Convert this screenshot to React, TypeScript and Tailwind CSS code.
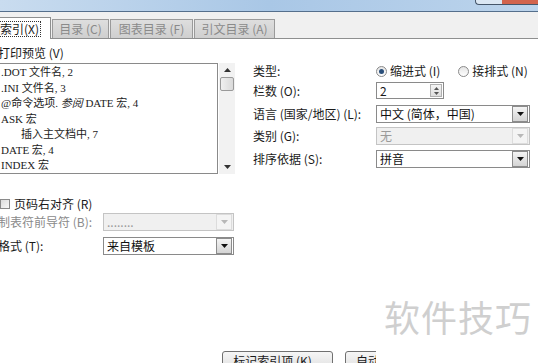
import React from "react";

const tabs = [
  { label: "目录 (C)", w: "w-[57px]" },
  { label: "图表目录 (F)", w: "w-[83px]" },
  { label: "引文目录 (A)", w: "w-[81px]" },
];

const previewLines: { text: React.ReactNode; indent?: boolean }[] = [
  { text: ".DOT 文件名, 2" },
  { text: ".INI 文件名, 3" },
  {
    text: (
      <>
        @命令选项. <i>参阅</i> DATE 宏, 4
      </>
    ),
  },
  { text: "ASK 宏" },
  { text: "插入主文档中, 7", indent: true },
  { text: "DATE 宏, 4" },
  { text: "INDEX 宏" },
  { text: "排版", indent: true },
];

const Arrow = ({ disabled }: { disabled?: boolean }) => (
  <svg width="7" height="4" viewBox="0 0 7 4">
    <path d="M0 0h7L3.5 4z" fill={disabled ? "#b8b8b8" : "#111"} />
  </svg>
);

const Select = ({
  value,
  disabled,
  className = "",
}: {
  value: string;
  disabled?: boolean;
  className?: string;
}) => (
  <div
    className={`flex h-[18px] items-center border ${
      disabled
        ? "border-[#c4c4c4] bg-[#f0f0f0] text-[#9a9a9a]"
        : "border-[#8a8a8a] bg-white text-[#111]"
    } ${className}`}
  >
    <span className="flex-1 pl-[3px] leading-none">{value}</span>
    <span
      className={`mr-[1px] flex h-[16px] w-[16px] items-center justify-center border ${
        disabled
          ? "border-[#dcdcdc] bg-[#f4f4f4]"
          : "border-[#8c8c8c] bg-gradient-to-b from-[#f4f4f4] to-[#d4d4d4]"
      }`}
    >
      <Arrow disabled={disabled} />
    </span>
  </div>
);

const Radio = ({ checked, label }: { checked?: boolean; label: string }) => (
  <label className="flex items-center gap-[3px]">
    <span className="flex h-[11px] w-[11px] items-center justify-center rounded-full border border-[#8a8a8a] bg-gradient-to-b from-[#e4e4e4] to-[#ffffff]">
      {checked && (
        <span className="h-[5px] w-[5px] rounded-full bg-[#2a4f7a]" />
      )}
    </span>
    <span className="leading-none">{label}</span>
  </label>
);

export default function App() {
  return (
    <div className="relative h-[363px] w-[538px] overflow-hidden bg-white font-['Noto_Sans_CJK_SC',sans-serif] text-[12px] text-[#1a1a1a]">
      {/* title bar */}
      <div className="flex h-[12px] justify-end border-b border-[#556f8c] bg-gradient-to-r from-[#c9dcef] via-[#a9c7e6] to-[#bcd4ec]">
        <div className="flex h-[5px] w-[63px] items-stretch rounded-bl-[4px] border-b border-l border-[#45566a] bg-[#dbe7f3]">
          <div className="ml-[26px] flex-1 bg-[#d2644d]" />
        </div>
      </div>

      {/* tab strip */}
      <div className="flex h-[27px] items-end border-b border-[#8e8f8f] bg-[#f0f0f0]">
        <div className="-mb-[1px] flex h-[22px] w-[51px] items-center border-r border-t border-[#8e8f8f] bg-white">
          <span className="-ml-[2px] border border-dotted border-[#333] px-[1px] leading-[14px]">
            索引(X)
          </span>
        </div>
        {tabs.map((t) => (
          <div
            key={t.label}
            className={`ml-[1px] flex h-[19px] ${t.w} items-center justify-center border border-b-0 border-[#9a9a9a] bg-gradient-to-b from-[#dedede] to-[#cfcfcf] text-[#8a8a8a]`}
          >
            {t.label}
          </div>
        ))}
      </div>

      {/* body */}
      <div className="flex">
        {/* left column */}
        <div className="-ml-[4px] w-[241px]">
          <div className="mt-[8px] pl-[2px] leading-[12px]">打印预览 (V)</div>
          <div className="mt-[4px] flex">
            <div className="h-[111px] w-[222px] overflow-hidden border border-[#8a8a8a] bg-white pl-[4px] pt-[1px] font-['Liberation_Serif','Noto_Sans_CJK_SC',serif] text-[11px] text-[#222]">
              {previewLines.map((l, i) => (
                <div
                  key={i}
                  className={`h-[15.5px] leading-[15.5px] whitespace-nowrap ${
                    l.indent ? "pl-[20px]" : ""
                  }`}
                >
                  {l.text}
                </div>
              ))}
            </div>
            <div className="ml-[1px] flex h-[111px] w-[16px] flex-col items-center bg-[#f2f2f2]">
              <svg width="7" height="4" viewBox="0 0 7 4" className="mt-[5px]">
                <path d="M0 4h7L3.5 0z" fill="#333" />
              </svg>
              <div className="mt-[5px] h-[14px] w-[14px] rounded-[2px] border border-[#9a9a9a] bg-gradient-to-r from-[#f0f0f0] to-[#dadada]" />
              <div className="flex-1" />
              <svg width="7" height="4" viewBox="0 0 7 4" className="mb-[5px]">
                <path d="M0 0h7L3.5 4z" fill="#333" />
              </svg>
            </div>
          </div>

          <div className="mt-[24px] flex items-center gap-[4px] pl-[4px]">
            <span className="h-[10px] w-[10px] border border-[#8a8a8a] bg-gradient-to-br from-[#dcdcdc] to-[#f8f8f8]" />
            <span className="leading-none">页码右对齐 (R)</span>
          </div>
          <div className="mt-[3px] flex items-center">
            <span className="w-[107px] pl-[2px] leading-none text-[#8a8a8a]">
              制表符前导符 (B):
            </span>
            <Select value="........" disabled className="w-[131px]" />
          </div>
          <div className="mt-[6px] flex items-center">
            <span className="w-[107px] pl-[2px] leading-none">格式 (T):</span>
            <Select value="来自模板" className="w-[131px]" />
          </div>
        </div>

        {/* right column */}
        <div className="ml-[16px] w-[277px]">
          <div className="mt-[24px] flex h-[16px] items-center">
            <span className="w-[123px] leading-none">类型:</span>
            <div className="flex items-center gap-[18px]">
              <Radio checked label="缩进式 (I)" />
              <Radio label="接排式 (N)" />
            </div>
          </div>
          <div className="mt-[3px] flex items-center">
            <span className="w-[123px] leading-none">栏数 (O):</span>
            <div className="flex h-[17px] w-[68px] items-center border border-[#8a8a8a] bg-white">
              <span className="flex-1 pl-[3px] leading-none">2</span>
              <div className="mr-[1px] flex h-[13px] w-[12px] flex-col items-center justify-center gap-[2px] border border-[#b0b0b0] bg-gradient-to-b from-[#f4f4f4] to-[#dedede]">
                <svg width="5" height="3" viewBox="0 0 5 3">
                  <path d="M0 3h5L2.5 0z" fill="#555" />
                </svg>
                <svg width="5" height="3" viewBox="0 0 5 3">
                  <path d="M0 0h5L2.5 3z" fill="#555" />
                </svg>
              </div>
            </div>
          </div>
          <div className="mt-[6px] flex items-center">
            <span className="w-[123px] leading-none">语言 (国家/地区) (L):</span>
            <Select value="中文 (简体，中国)" className="w-[154px]" />
          </div>
          <div className="mt-[4px] flex items-center">
            <span className="w-[123px] leading-none">类别 (G):</span>
            <Select value="无" disabled className="w-[154px]" />
          </div>
          <div className="mt-[5px] flex items-center">
            <span className="w-[123px] leading-none">排序依据 (S):</span>
            <Select value="拼音" className="w-[154px]" />
          </div>
        </div>
      </div>

      {/* bottom buttons */}
      <div className="absolute left-[222px] top-[351px] flex w-[154px] gap-[12px] overflow-hidden">
        <div className="flex h-[22px] w-[111px] shrink-0 items-start justify-center rounded-[3px] border border-[#707070] bg-gradient-to-b from-[#f6f6f6] to-[#dcdcdc] pt-[3px] leading-none">
          标记索引项 (K)...
        </div>
        <div className="flex h-[22px] w-[70px] shrink-0 items-start rounded-[3px] border border-[#707070] bg-gradient-to-b from-[#f6f6f6] to-[#dcdcdc] pl-[10px] pt-[3px] leading-none">
          自动
        </div>
      </div>

      {/* watermark */}
      <div className="absolute left-[384px] top-[298px] text-[36px] leading-none tracking-[1px] text-[#cfcfcf]">
        软件技巧
      </div>
    </div>
  );
}
